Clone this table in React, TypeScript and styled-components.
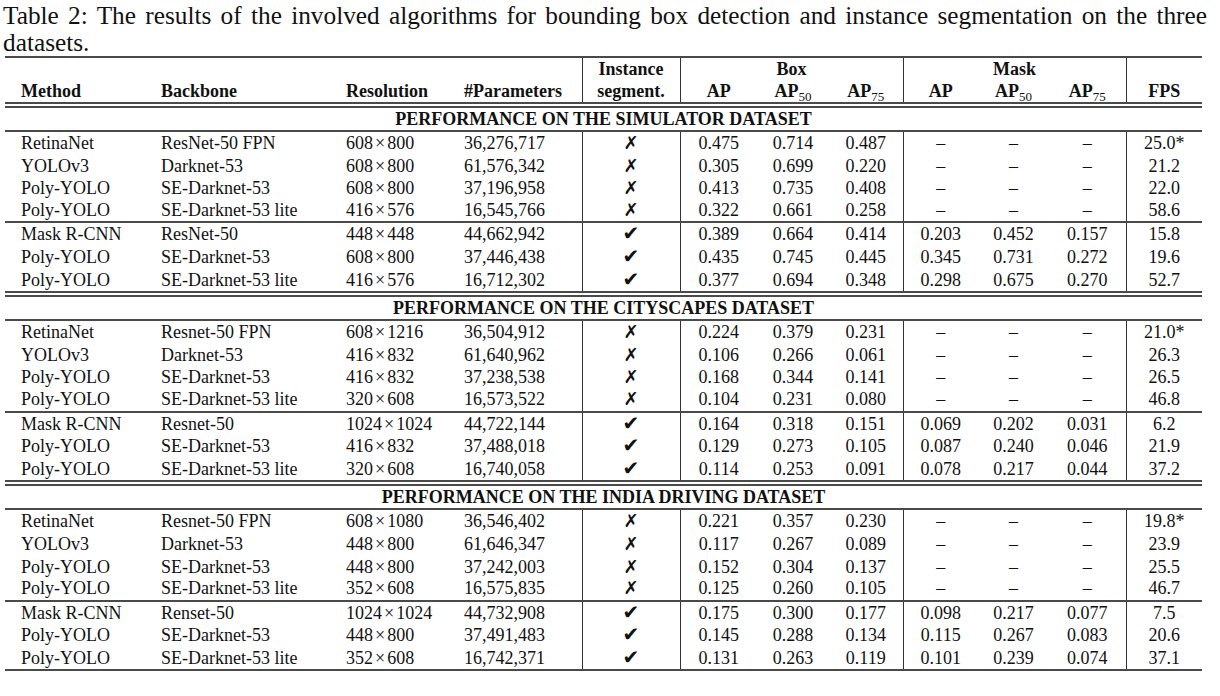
import React from "react";
import styled, { createGlobalStyle } from "styled-components";

const Global = createGlobalStyle`
  html, body { margin: 0; padding: 0; background: #fff; }
  * { box-sizing: border-box; }
`;

const Page = styled.div`
  padding: 2px 0 0 3px;
  width: 1220px;
  font-family: "Liberation Serif", "Times New Roman", serif;
  color: #111;
`;

const Caption = styled.div`
  width: 1204px;
  font-size: 25.3px;
  line-height: 27px;
`;

const CaptionLine = styled.div<{ $justify?: boolean }>`
  text-align: ${(p) => (p.$justify ? "justify" : "left")};
  text-align-last: ${(p) => (p.$justify ? "justify" : "left")};
  white-space: nowrap;
`;

const Table = styled.table`
  margin-left: 2px;
  width: 1197px;
  table-layout: fixed;
  border-collapse: collapse;
  border-top: 2px solid #4a4a4a;
  border-bottom: 2px solid #4a4a4a;
  font-size: 18px;
`;

const HeadRow = styled.tr<{ $double?: boolean }>`
  & > th {
    border-bottom: ${(p) => (p.$double ? "6px double #4a4a4a" : "none")};
  }
`;

const HeadCell = styled.th<{ $align?: string; $bar?: boolean }>`
  font-weight: 700;
  padding: 0 0 0 ${(p) => (p.$align === "left" ? "16px" : "0")};
  line-height: 22px;
  text-align: ${(p) => p.$align || "center"};
  vertical-align: middle;
  border-left: ${(p) => (p.$bar ? "1px solid #333" : "none")};
  white-space: nowrap;
`;

const Sub = styled.sub`
  font-weight: 400;
  font-size: 13px;
  line-height: 0;
  vertical-align: -4px;
`;

const SectionRow = styled.tr<{ $first?: boolean }>`
  & > td {
    border-top: ${(p) => (p.$first ? "none" : "6px double #4a4a4a")};
    border-bottom: 2px solid #4a4a4a;
  }
`;

const SectionCell = styled.td`
  font-weight: 700;
  text-align: center;
  line-height: 22px;
  padding: 0;
`;

const DataRow = styled.tr<{ $rule?: boolean }>`
  & > td {
    border-bottom: ${(p) => (p.$rule ? "2px solid #4a4a4a" : "none")};
    line-height: ${(p) => (p.$rule ? "21.6px" : "22.6px")};
  }
`;

const Cell = styled.td<{ $align?: string; $bar?: boolean }>`
  padding: 0 0 0 ${(p) => (p.$align === "left" ? "16px" : "0")};
  text-align: ${(p) => p.$align || "center"};
  vertical-align: middle;
  border-left: ${(p) => (p.$bar ? "1px solid #333" : "none")};
  white-space: nowrap;
`;

const Times = styled.span`
  margin: 0 2px;
`;

const Mark = styled.span<{ $check?: boolean }>`
  font-family: "DejaVu Sans", sans-serif;
  font-size: ${(p) => (p.$check ? "20px" : "18px")};
  font-weight: 700;
  line-height: 1;
`;

type Row = [string, string, string, string, boolean, string[], string[] | null, string];

interface Section {
  title: string;
  rows: Row[];
}

const sections: Section[] = [
  {
    title: "PERFORMANCE ON THE SIMULATOR DATASET",
    rows: [
      ["RetinaNet", "ResNet-50 FPN", "608×800", "36,276,717", false, ["0.475", "0.714", "0.487"], null, "25.0*"],
      ["YOLOv3", "Darknet-53", "608×800", "61,576,342", false, ["0.305", "0.699", "0.220"], null, "21.2"],
      ["Poly-YOLO", "SE-Darknet-53", "608×800", "37,196,958", false, ["0.413", "0.735", "0.408"], null, "22.0"],
      ["Poly-YOLO", "SE-Darknet-53 lite", "416×576", "16,545,766", false, ["0.322", "0.661", "0.258"], null, "58.6"],
      ["Mask R-CNN", "ResNet-50", "448×448", "44,662,942", true, ["0.389", "0.664", "0.414"], ["0.203", "0.452", "0.157"], "15.8"],
      ["Poly-YOLO", "SE-Darknet-53", "608×800", "37,446,438", true, ["0.435", "0.745", "0.445"], ["0.345", "0.731", "0.272"], "19.6"],
      ["Poly-YOLO", "SE-Darknet-53 lite", "416×576", "16,712,302", true, ["0.377", "0.694", "0.348"], ["0.298", "0.675", "0.270"], "52.7"],
    ],
  },
  {
    title: "PERFORMANCE ON THE CITYSCAPES DATASET",
    rows: [
      ["RetinaNet", "Resnet-50 FPN", "608×1216", "36,504,912", false, ["0.224", "0.379", "0.231"], null, "21.0*"],
      ["YOLOv3", "Darknet-53", "416×832", "61,640,962", false, ["0.106", "0.266", "0.061"], null, "26.3"],
      ["Poly-YOLO", "SE-Darknet-53", "416×832", "37,238,538", false, ["0.168", "0.344", "0.141"], null, "26.5"],
      ["Poly-YOLO", "SE-Darknet-53 lite", "320×608", "16,573,522", false, ["0.104", "0.231", "0.080"], null, "46.8"],
      ["Mask R-CNN", "Resnet-50", "1024×1024", "44,722,144", true, ["0.164", "0.318", "0.151"], ["0.069", "0.202", "0.031"], "6.2"],
      ["Poly-YOLO", "SE-Darknet-53", "416×832", "37,488,018", true, ["0.129", "0.273", "0.105"], ["0.087", "0.240", "0.046"], "21.9"],
      ["Poly-YOLO", "SE-Darknet-53 lite", "320×608", "16,740,058", true, ["0.114", "0.253", "0.091"], ["0.078", "0.217", "0.044"], "37.2"],
    ],
  },
  {
    title: "PERFORMANCE ON THE INDIA DRIVING DATASET",
    rows: [
      ["RetinaNet", "Resnet-50 FPN", "608×1080", "36,546,402", false, ["0.221", "0.357", "0.230"], null, "19.8*"],
      ["YOLOv3", "Darknet-53", "448×800", "61,646,347", false, ["0.117", "0.267", "0.089"], null, "23.9"],
      ["Poly-YOLO", "SE-Darknet-53", "448×800", "37,242,003", false, ["0.152", "0.304", "0.137"], null, "25.5"],
      ["Poly-YOLO", "SE-Darknet-53 lite", "352×608", "16,575,835", false, ["0.125", "0.260", "0.105"], null, "46.7"],
      ["Mask R-CNN", "Renset-50", "1024×1024", "44,732,908", true, ["0.175", "0.300", "0.177"], ["0.098", "0.217", "0.077"], "7.5"],
      ["Poly-YOLO", "SE-Darknet-53", "448×800", "37,491,483", true, ["0.145", "0.288", "0.134"], ["0.115", "0.267", "0.083"], "20.6"],
      ["Poly-YOLO", "SE-Darknet-53 lite", "352×608", "16,742,371", true, ["0.131", "0.263", "0.119"], ["0.101", "0.239", "0.074"], "37.1"],
    ],
  },
];

const widths = [140, 185, 118, 134, 98, 77, 72, 74, 75, 71, 77, 76];

function Resolution({ value }: { value: string }) {
  const [a, b] = value.split("×");
  return (
    <>
      {a}
      <Times>×</Times>
      {b}
    </>
  );
}

function AP({ sub }: { sub?: string }) {
  return (
    <>
      AP{sub && <Sub>{sub}</Sub>}
    </>
  );
}

export default function App() {
  return (
    <Page>
      <Global />
      <Caption>
        <CaptionLine $justify>
          Table 2: The results of the involved algorithms for bounding box detection and instance segmentation on the three
        </CaptionLine>
        <CaptionLine>datasets.</CaptionLine>
      </Caption>
      <Table>
        <colgroup>
          {widths.map((w, i) => (
            <col key={i} style={{ width: w }} />
          ))}
        </colgroup>
        <thead>
          <HeadRow>
            <HeadCell $align="left" />
            <HeadCell $align="left" />
            <HeadCell $align="left" />
            <HeadCell $align="left" />
            <HeadCell $bar>Instance</HeadCell>
            <HeadCell colSpan={3} $bar>Box</HeadCell>
            <HeadCell colSpan={3} $bar>Mask</HeadCell>
            <HeadCell $bar />
          </HeadRow>
          <HeadRow $double>
            <HeadCell $align="left">Method</HeadCell>
            <HeadCell $align="left">Backbone</HeadCell>
            <HeadCell $align="left">Resolution</HeadCell>
            <HeadCell $align="left">#Parameters</HeadCell>
            <HeadCell $bar>segment.</HeadCell>
            <HeadCell $bar><AP /></HeadCell>
            <HeadCell><AP sub="50" /></HeadCell>
            <HeadCell><AP sub="75" /></HeadCell>
            <HeadCell $bar><AP /></HeadCell>
            <HeadCell><AP sub="50" /></HeadCell>
            <HeadCell><AP sub="75" /></HeadCell>
            <HeadCell $bar>FPS</HeadCell>
          </HeadRow>
        </thead>
        {sections.map((s, si) => (
          <tbody key={s.title}>
            <SectionRow $first={si === 0}>
              <SectionCell colSpan={12}>{s.title}</SectionCell>
            </SectionRow>
            {s.rows.map((r, i) => (
              <DataRow key={i} $rule={i === 3}>
                <Cell $align="left">{r[0]}</Cell>
                <Cell $align="left">{r[1]}</Cell>
                <Cell $align="left"><Resolution value={r[2]} /></Cell>
                <Cell $align="left">{r[3]}</Cell>
                <Cell $bar><Mark $check={r[4]}>{r[4] ? "✔" : "✗"}</Mark></Cell>
                <Cell $bar>{r[5][0]}</Cell>
                <Cell>{r[5][1]}</Cell>
                <Cell>{r[5][2]}</Cell>
                <Cell $bar>{r[6] ? r[6][0] : "–"}</Cell>
                <Cell>{r[6] ? r[6][1] : "–"}</Cell>
                <Cell>{r[6] ? r[6][2] : "–"}</Cell>
                <Cell $bar>{r[7]}</Cell>
              </DataRow>
            ))}
          </tbody>
        ))}
      </Table>
    </Page>
  );
}
